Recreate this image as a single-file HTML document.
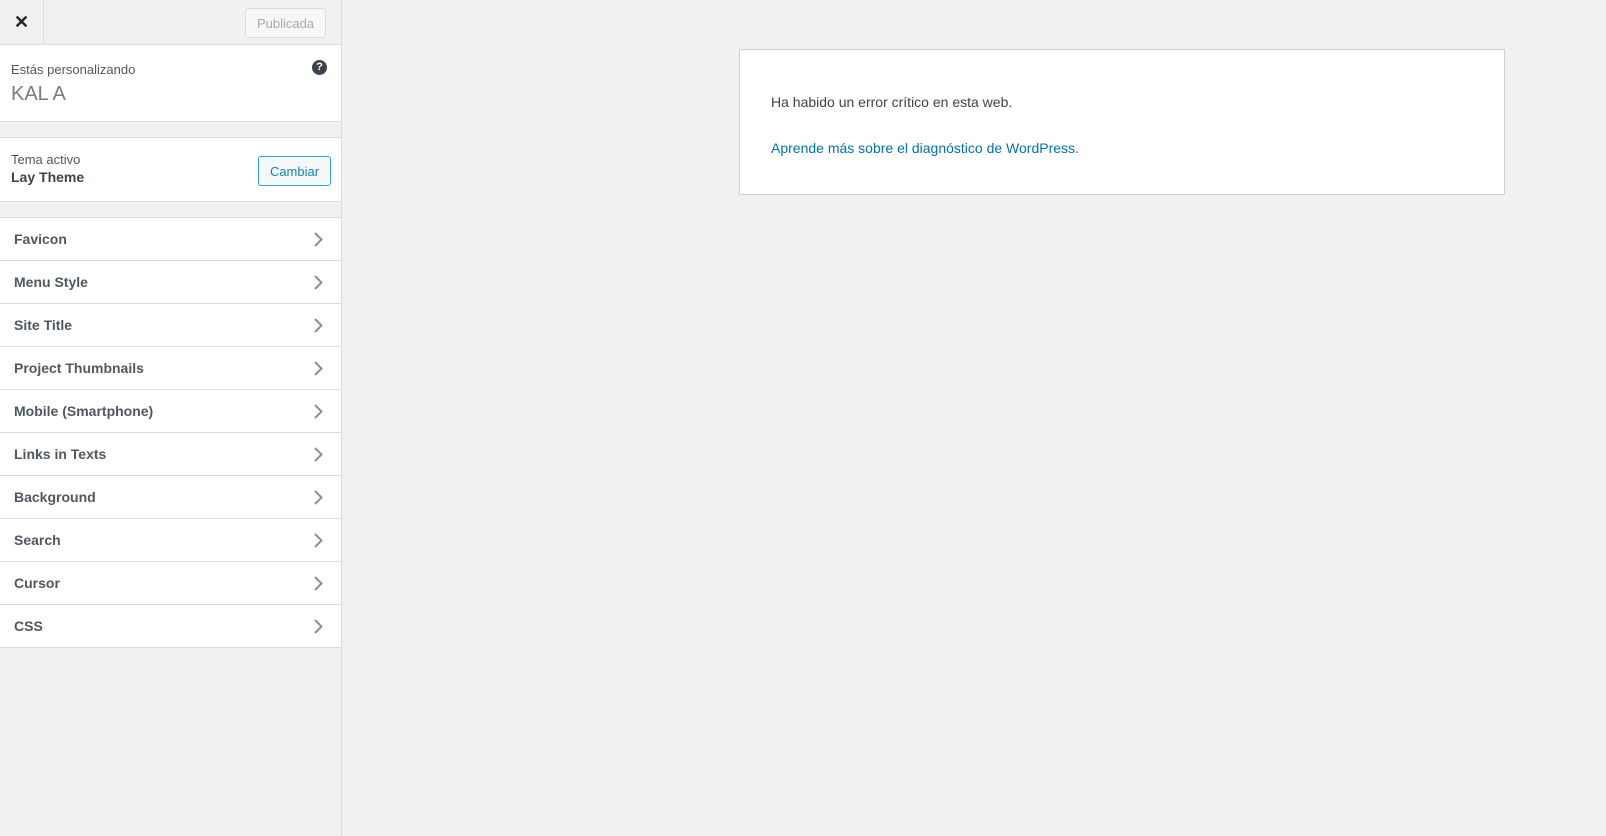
<!DOCTYPE html>
<html><head><meta charset="utf-8"><style>
*{box-sizing:border-box;margin:0;padding:0}
body{width:1606px;height:836px;background:#f1f1f1;font-family:"Liberation Sans",sans-serif;color:#3c434a;position:relative;overflow:hidden}
#side{position:absolute;left:0;top:0;width:342px;height:836px;background:#f1f1f1;border-right:1px solid #dcdcde}
.hdr{position:absolute;left:0;top:0;width:341px;height:45px;border-bottom:1px solid #dcdcde}
.close{position:absolute;left:0;top:0;width:44px;height:44px;border-right:1px solid #dcdcde;font-size:18px;font-weight:bold;text-align:center;line-height:44px;color:#1d2327}
.pub{position:absolute;left:245px;top:8px;width:81px;height:30px;border:1px solid #dcdcde;border-radius:3px;color:#a7aaad;font-size:13px;text-align:center;line-height:29px;background:#f6f7f7}
.info{position:absolute;left:0;top:45px;width:341px;height:77px;background:#fff;border-bottom:1px solid #dcdcde}
.theme{position:absolute;left:0;top:137px;width:341px;height:65px;background:#fff;border-top:1px solid #dcdcde;border-bottom:1px solid #dcdcde}
.cam{position:absolute;left:258px;top:18px;width:73px;height:30px;border:1px solid #2fa7c8;border-radius:3px;color:#0e86b3;font-size:13px;text-align:center;line-height:29px;background:#f6f7f7}
.list{position:absolute;left:0;top:217px;width:341px;border-top:1px solid #dcdcde}
.row{height:43px;background:#fff;border-bottom:1px solid #dcdcde;position:relative;font-size:14px;font-weight:bold;line-height:42px;padding-left:14px;color:#50575e}
.row svg{position:absolute;right:18px;top:14px}
.box{position:absolute;left:739px;top:49px;width:766px;height:146px;background:#fff;border:1px solid #ccd0d4;font-size:14px}
</style></head><body>
<div id="side">
<div class="hdr"><div class="close">✕</div><div class="pub">Publicada</div></div>
<div class="info">
<div style="position:absolute;left:11px;top:17px;font-size:13px;color:#50575e">Estás personalizando</div>
<div style="position:absolute;left:11px;top:38px;font-size:20px;font-weight:300;color:#787c82">KAL A</div>
<div style="position:absolute;left:312px;top:15px;width:15px;height:15px;border-radius:50%;background:#3c434a;color:#fff;font-size:11px;font-weight:bold;text-align:center;line-height:15px">?</div>
</div>
<div class="theme">
<div style="position:absolute;left:11px;top:14px;font-size:13px;color:#50575e">Tema activo</div>
<div style="position:absolute;left:11px;top:31px;font-size:14px;font-weight:bold;color:#3c434a">Lay Theme</div>
<div class="cam">Cambiar</div>
</div>
<div class="list">
<div class="row">Favicon<svg width="9" height="15" viewBox="0 0 9 15"><path d="M1 1l6.5 6.5L1 14" fill="none" stroke="#8c8f94" stroke-width="2"/></svg></div>
<div class="row">Menu Style<svg width="9" height="15" viewBox="0 0 9 15"><path d="M1 1l6.5 6.5L1 14" fill="none" stroke="#8c8f94" stroke-width="2"/></svg></div>
<div class="row">Site Title<svg width="9" height="15" viewBox="0 0 9 15"><path d="M1 1l6.5 6.5L1 14" fill="none" stroke="#8c8f94" stroke-width="2"/></svg></div>
<div class="row">Project Thumbnails<svg width="9" height="15" viewBox="0 0 9 15"><path d="M1 1l6.5 6.5L1 14" fill="none" stroke="#8c8f94" stroke-width="2"/></svg></div>
<div class="row">Mobile (Smartphone)<svg width="9" height="15" viewBox="0 0 9 15"><path d="M1 1l6.5 6.5L1 14" fill="none" stroke="#8c8f94" stroke-width="2"/></svg></div>
<div class="row">Links in Texts<svg width="9" height="15" viewBox="0 0 9 15"><path d="M1 1l6.5 6.5L1 14" fill="none" stroke="#8c8f94" stroke-width="2"/></svg></div>
<div class="row">Background<svg width="9" height="15" viewBox="0 0 9 15"><path d="M1 1l6.5 6.5L1 14" fill="none" stroke="#8c8f94" stroke-width="2"/></svg></div>
<div class="row">Search<svg width="9" height="15" viewBox="0 0 9 15"><path d="M1 1l6.5 6.5L1 14" fill="none" stroke="#8c8f94" stroke-width="2"/></svg></div>
<div class="row">Cursor<svg width="9" height="15" viewBox="0 0 9 15"><path d="M1 1l6.5 6.5L1 14" fill="none" stroke="#8c8f94" stroke-width="2"/></svg></div>
<div class="row">CSS<svg width="9" height="15" viewBox="0 0 9 15"><path d="M1 1l6.5 6.5L1 14" fill="none" stroke="#8c8f94" stroke-width="2"/></svg></div>
</div>
</div>
<div class="box">
<div style="position:absolute;left:31px;top:44px;color:#3c434a">Ha habido un error crítico en esta web.</div>
<div style="position:absolute;left:31px;top:90px;color:#0073aa">Aprende más sobre el diagnóstico de WordPress.</div>
</div>
</body></html>
